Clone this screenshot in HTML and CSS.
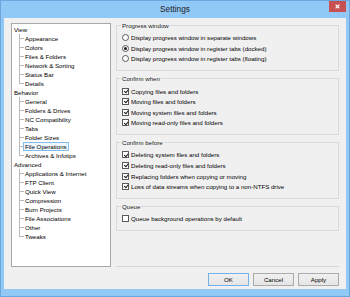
FILE: index.html
```html
<!DOCTYPE html>
<html lang="en">
<head>
<meta charset="utf-8">
<title>Settings</title>
<link rel="stylesheet" href="styles.css">
</head>
<body>
<div class="window">
  <div class="titlebar">
    <span></span>
    <div class="title">Settings</div>
    <div class="close"><svg width="5" height="5" viewBox="0 0 5 5"><path d="M0.6 0.6L4.4 4.4M4.4 0.6L0.6 4.4" stroke="#fff" stroke-width="1.3"/></svg></div>
  </div>
  <div class="client">
    <div class="main">
      <ul class="tree">
        <li><span class="row">View</span>
          <ul class="children">
            <li><span class="row">Appearance</span></li>
            <li><span class="row">Colors</span></li>
            <li><span class="row">Files &amp; Folders</span></li>
            <li><span class="row">Network &amp; Sorting</span></li>
            <li><span class="row">Status Bar</span></li>
            <li><span class="row">Details</span></li>
          </ul>
        </li>
        <li><span class="row">Behavior</span>
          <ul class="children">
            <li><span class="row">General</span></li>
            <li><span class="row">Folders &amp; Drives</span></li>
            <li><span class="row">NC Compatibility</span></li>
            <li><span class="row">Tabs</span></li>
            <li><span class="row">Folder Sizes</span></li>
            <li><span class="row selected">File Operations</span></li>
            <li><span class="row">Archives &amp; Infotips</span></li>
          </ul>
        </li>
        <li><span class="row">Advanced</span>
          <ul class="children">
            <li><span class="row">Applications &amp; Internet</span></li>
            <li><span class="row">FTP Client</span></li>
            <li><span class="row">Quick View</span></li>
            <li><span class="row">Compression</span></li>
            <li><span class="row">Burn Projects</span></li>
            <li><span class="row">File Associations</span></li>
            <li><span class="row">Other</span></li>
            <li><span class="row">Tweaks</span></li>
          </ul>
        </li>
      </ul>
      <div class="panel">
        <fieldset class="group">
          <legend>Progress window</legend>
          <div class="opt"><span class="radio"></span>Display progress window in separate windows</div>
          <div class="opt"><span class="radio on"></span>Display progress window in register tabs (docked)</div>
          <div class="opt"><span class="radio"></span>Display progress window in register tabs (floating)</div>
        </fieldset>
        <fieldset class="group">
          <legend>Confirm when</legend>
          <div class="opt"><span class="check on"></span>Copying files and folders</div>
          <div class="opt"><span class="check on"></span>Moving files and folders</div>
          <div class="opt"><span class="check on"></span>Moving system files and folders</div>
          <div class="opt"><span class="check on"></span>Moving read-only files and folders</div>
        </fieldset>
        <fieldset class="group">
          <legend>Confirm before</legend>
          <div class="opt"><span class="check on"></span>Deleting system files and folders</div>
          <div class="opt"><span class="check on"></span>Deleting read-only files and folders</div>
          <div class="opt"><span class="check on"></span>Replacing folders when copying or moving</div>
          <div class="opt"><span class="check on"></span>Loss of data streams when copying to a non-NTFS drive</div>
        </fieldset>
        <fieldset class="group">
          <legend>Queue</legend>
          <div class="opt"><span class="check"></span>Queue background operations by default</div>
        </fieldset>
        <div class="separator"></div>
      </div>
    </div>
    <div class="buttons">
      <button class="btn default">OK</button>
      <button class="btn">Cancel</button>
      <button class="btn">Apply</button>
    </div>
  </div>
</div>
</body>
</html>
```

FILE: styles.css
```css
html, body {
  margin: 0;
  padding: 0;
}

body {
  font-family: "Liberation Sans", Arial, sans-serif;
  font-size: 6.15px;
  color: #000;
  background: #91c8f5;
}

.window {
  width: 350px;
  height: 297px;
  box-sizing: border-box;
  border: 1px solid #6aa7dc;
  background: #91c8f5;
  display: flex;
  flex-direction: column;
}

.titlebar {
  height: 17px;
  display: grid;
  grid-template-columns: 1fr auto 1fr;
  align-items: start;
}

.title {
  font-size: 8.3px;
  line-height: 16px;
  color: #1e1e1e;
}

.close {
  justify-self: end;
  margin-right: 3px;
  width: 17px;
  height: 11px;
  background: #c75050;
  display: flex;
  align-items: center;
  justify-content: center;
}

.close svg {
  display: block;
}

.client {
  flex: 1;
  margin: 0 3px 7px 3px;
  background: #f0f0f0;
  padding: 2.5px 7px 0 7px;
  display: flex;
  flex-direction: column;
}

.main {
  display: grid;
  grid-template-columns: 100px 1fr;
  column-gap: 5px;
}

/* tree */
.tree {
  list-style: none;
  margin: 2.5px 0 0 0;
  padding: 0.5px 0 0 0;
  width: 100px;
  height: 244px;
  box-sizing: border-box;
  border: 1px solid #a8a8a8;
  background: #fff;
}

.tree ul {
  list-style: none;
  margin: 0;
}

.tree li {
  margin: 0;
  padding: 0;
}

.row {
  display: inline-block;
  box-sizing: border-box;
  height: 9px;
  line-height: 7px;
  padding: 0 1px;
  border: 1px solid transparent;
  white-space: nowrap;
  vertical-align: top;
}

.tree > li > .row {
  margin-left: 0;
}

.children {
  padding-left: 11px;
}

.children > li {
  position: relative;
  height: 9px;
}

.children > li::before {
  content: "";
  position: absolute;
  left: -4px;
  top: 0;
  height: 9px;
  border-left: 1px solid #b8b8b8;
}

.children > li:last-child::before {
  height: 5px;
}

.children > li::after {
  content: "";
  position: absolute;
  left: -4px;
  top: 4px;
  width: 5px;
  border-top: 1px solid #b8b8b8;
}

.row.selected {
  border-color: #84bdec;
  background: #eef7fe;
  position: relative;
  z-index: 1;
}

/* panel */
.panel {
  display: flex;
  flex-direction: column;
}

.group {
  margin: 0;
  border: 1px solid #dadada;
  padding: 3px 5px 6px 5px;
  min-width: 0;
}

.group + .group {
  margin-top: 2.5px;
}

.group legend {
  padding: 0 1px;
  margin-left: -1px;
  line-height: 9px;
  color: #1a1a1a;
}

.opt {
  display: flex;
  align-items: center;
  height: 10.6px;
  white-space: nowrap;
}

.radio,
.check {
  flex: none;
  width: 7px;
  height: 7px;
  box-sizing: border-box;
  border: 1px solid #5a5a5a;
  background: #fff;
  margin-right: 2px;
  display: flex;
  align-items: center;
  justify-content: center;
}

.radio {
  border-radius: 50%;
}

.radio.on::after {
  content: "";
  width: 3px;
  height: 3px;
  border-radius: 50%;
  background: #1a1a1a;
}

.check.on::after {
  content: "";
  width: 3px;
  height: 1.6px;
  border-left: 1.2px solid #1a1a1a;
  border-bottom: 1.2px solid #1a1a1a;
  transform: translateY(-0.6px) rotate(-50deg);
}

.separator {
  margin-top: auto;
  height: 1px;
  background: #d6d6d6;
}

.buttons {
  display: flex;
  justify-content: flex-end;
  gap: 4px;
  padding-top: 6px;
}

.btn {
  width: 41px;
  height: 13px;
  box-sizing: border-box;
  margin: 0;
  padding: 0;
  font-family: "Liberation Sans", Arial, sans-serif;
  font-size: 6.15px;
  line-height: 11px;
  color: #000;
  background: linear-gradient(#f0f0f0, #e5e5e5);
  border: 1px solid #acacac;
  border-radius: 0;
}

.btn.default {
  border-color: #72b2ec;
}
```
